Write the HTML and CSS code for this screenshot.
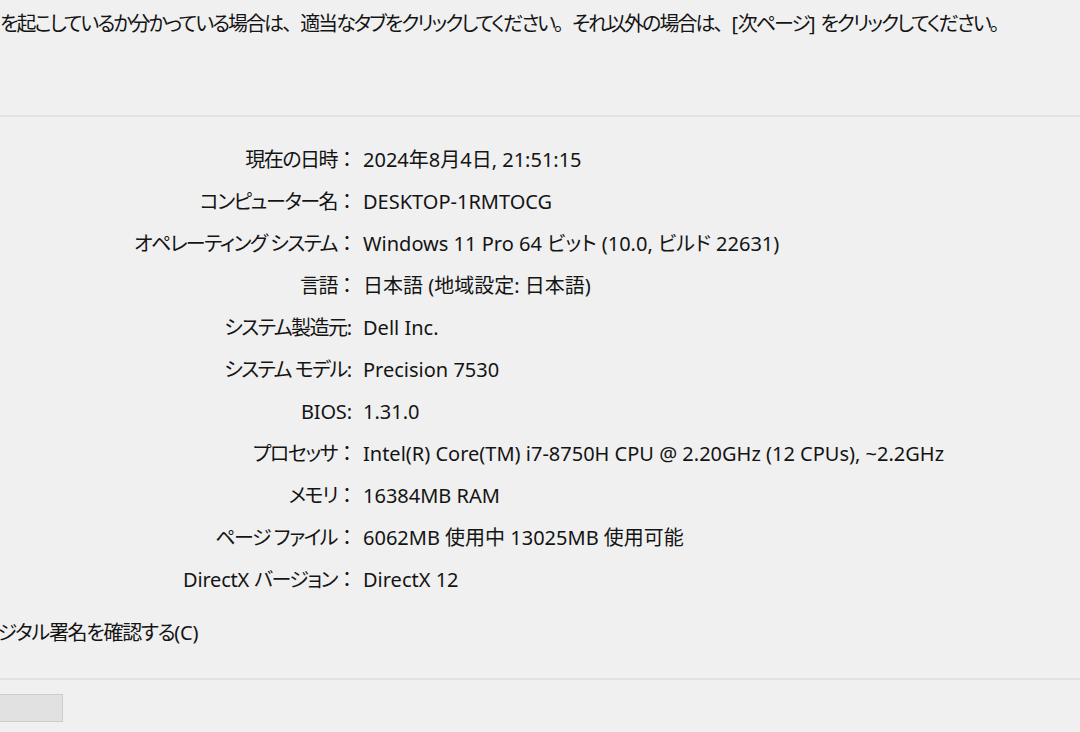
FILE: index.html
```html
<!DOCTYPE html>
<html lang="ja">
<head>
    <meta charset="UTF-8">
    <title>DirectX 診断ツール</title>
    <link rel="stylesheet" href="styles.css">
</head>
<body>
    <div class="dialog">
        <p class="intro">を起こしているか分かっている場合は<span class="punct">、</span>適当なタブをクリックしてください<span class="punct">。</span>それ以外の場合は<span class="punct">、</span><span class="latin">[</span>次ページ<span class="latin">] </span>をクリックしてください<span class="punct">。</span></p>

        <hr class="sep top-sep">

        <div class="info">
            <span class="label">現在の日時</span><span class="value">2024年8月4日, 21:51:15</span>
            <span class="label">コンピューター名</span><span class="value">DESKTOP-1RMTOCG</span>
            <span class="label">オペレーティング システム</span><span class="value">Windows 11 Pro 64 ビット (10.0, ビルド 22631)</span>
            <span class="label">言語</span><span class="value">日本語 (地域設定: 日本語)</span>
            <span class="label half">システム製造元</span><span class="value">Dell Inc.</span>
            <span class="label half">システム モデル</span><span class="value">Precision 7530</span>
            <span class="label half"><span class="latin">BIOS</span></span><span class="value">1.31.0</span>
            <span class="label">プロセッサ</span><span class="value">Intel(R) Core(TM) i7-8750H CPU @ 2.20GHz (12 CPUs), ~2.2GHz</span>
            <span class="label">メモリ</span><span class="value">16384MB RAM</span>
            <span class="label">ページ ファイル</span><span class="value">6062MB 使用中 13025MB 使用可能</span>
            <span class="label"><span class="latin">DirectX </span>バージョン</span><span class="value">DirectX 12</span>
        </div>

        <label class="check">デジタル署名を確認する<span class="latin">(C)</span></label>

        <hr class="sep bottom-sep">

        <div class="buttons">
            <button class="btn"></button>
        </div>
    </div>
</body>
</html>
```

FILE: styles.css
```css
body {
    margin: 0;
    background: #f0f0f0;
    color: #141414;
    font-family: "Noto Sans", "Noto Sans CJK JP", sans-serif;
    font-size: 20px;
    font-feature-settings: "palt";
    overflow: hidden;
    width: 1080px;
    height: 732px;
}
.dialog {
    display: flex;
    flex-direction: column;
}
.intro {
    margin: 10px 0 0 0;
    line-height: 28px;
    white-space: nowrap;
    letter-spacing: -2px;
}
.punct {
    font-feature-settings: normal;
}
.latin {
    letter-spacing: -0.2px;
}
.sep {
    width: 100%;
    margin: 0;
    border: none;
    height: 2px;
    background: #e2e2e2;
}
.top-sep {
    margin-top: 77px;
}
.info {
    display: grid;
    grid-template-columns: 357px 1fr;
    column-gap: 6px;
    margin-top: 22px;
}
.label,
.value {
    line-height: 42px;
    white-space: nowrap;
}
.label {
    text-align: right;
    letter-spacing: -1.5px;
}
.label::after {
    content: "：";
    font-feature-settings: normal;
    letter-spacing: 0;
}
.label.half::after {
    content: ":";
    padding-right: 5px;
}
.check {
    margin: 18px 0 0 -20px;
    line-height: 28px;
    white-space: nowrap;
    letter-spacing: -1.3px;
}
.bottom-sep {
    margin-top: 31px;
}
.buttons {
    display: flex;
    margin-top: 14px;
}
.btn {
    width: 100px;
    height: 28px;
    margin-left: -37px;
    background: #e1e1e1;
    border: 1px solid #cdcdcd;
    padding: 0;
}
```
